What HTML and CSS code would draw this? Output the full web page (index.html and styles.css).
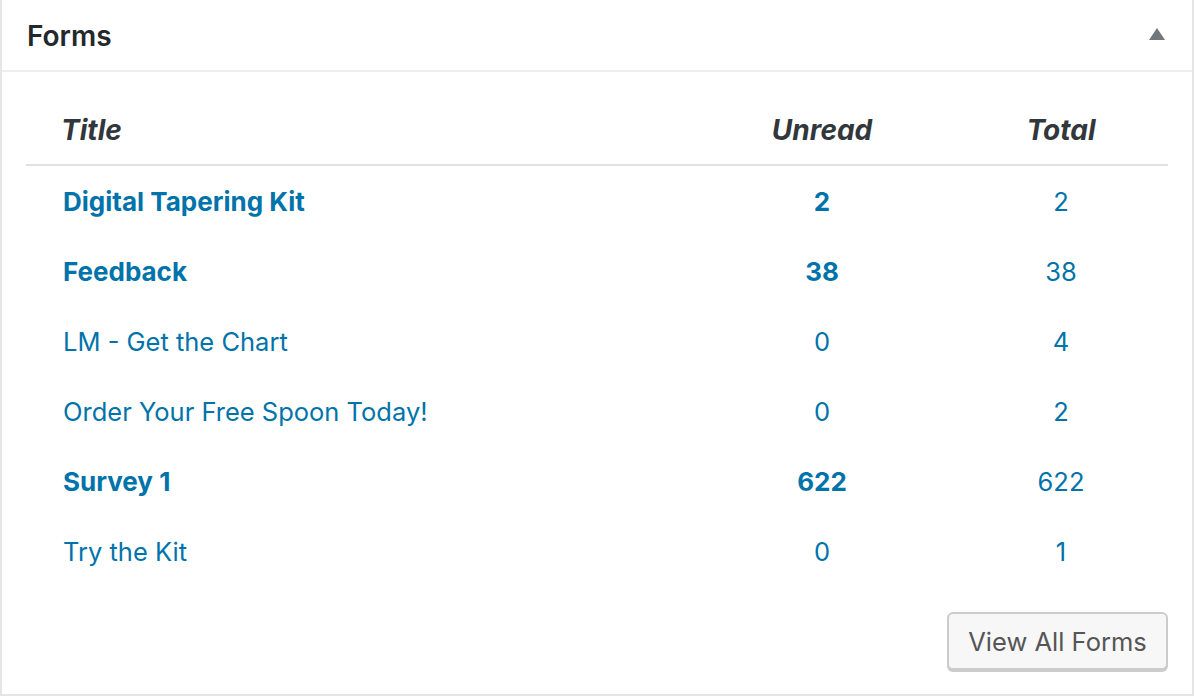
FILE: index.html
```html
<!DOCTYPE html>
<html>
<head>
<meta charset="utf-8">
<link rel="stylesheet" href="styles.css">
</head>
<body>
<div class="widget">
  <div class="widget-head">
    <h2 class="widget-title">Forms</h2>
    <span class="toggle" aria-hidden="true"></span>
  </div>
  <div class="widget-body">
    <div class="forms-table">
      <div class="row head">
        <div class="cell title">Title</div>
        <div class="cell num">Unread</div>
        <div class="cell num">Total</div>
      </div>
      <div class="row unread">
        <div class="cell title"><a href="#">Digital Tapering Kit</a></div>
        <div class="cell num"><a href="#">2</a></div>
        <div class="cell num total"><a href="#">2</a></div>
      </div>
      <div class="row unread">
        <div class="cell title"><a href="#">Feedback</a></div>
        <div class="cell num"><a href="#">38</a></div>
        <div class="cell num total"><a href="#">38</a></div>
      </div>
      <div class="row">
        <div class="cell title"><a href="#">LM - Get the Chart</a></div>
        <div class="cell num"><a href="#">0</a></div>
        <div class="cell num total"><a href="#">4</a></div>
      </div>
      <div class="row">
        <div class="cell title"><a href="#">Order Your Free Spoon Today!</a></div>
        <div class="cell num"><a href="#">0</a></div>
        <div class="cell num total"><a href="#">2</a></div>
      </div>
      <div class="row unread">
        <div class="cell title"><a href="#">Survey 1</a></div>
        <div class="cell num"><a href="#">622</a></div>
        <div class="cell num total"><a href="#">622</a></div>
      </div>
      <div class="row">
        <div class="cell title"><a href="#">Try the Kit</a></div>
        <div class="cell num"><a href="#">0</a></div>
        <div class="cell num total"><a href="#">1</a></div>
      </div>
    </div>
    <div class="actions">
      <a class="button" href="#">View All Forms</a>
    </div>
  </div>
</div>
</body>
</html>
```

FILE: styles.css
```css
html, body {
  margin: 0;
  padding: 0;
  background: #ffffff;
}
body {
  font-family: Inter, "Noto Sans", "Liberation Sans", sans-serif;
  color: #32373c;
}
.widget {
  width: 1194px;
  height: 696px;
  box-sizing: border-box;
  border: 2px solid #e5e5e5;
  border-top: none;
  background: #fff;
}
.widget-head {
  height: 70px;
  border-bottom: 2px solid #eeeeee;
  display: flex;
  align-items: center;
  justify-content: space-between;
  padding: 0 27px 0 25px;
}
.widget-title {
  margin: 0;
  font-size: 28px;
  font-weight: 600;
  color: #23282d;
  padding-top: 2px;
}
.toggle {
  width: 0;
  height: 0;
  border-left: 8px solid transparent;
  border-right: 8px solid transparent;
  border-bottom: 12px solid #72777c;
  margin-bottom: 2px;
}
.widget-body {
  padding: 24px 24px 0 24px;
}
.row {
  display: grid;
  grid-template-columns: 664px 264px 214px;
  height: 70px;
  align-items: center;
}
.row.head {
  height: 68px;
  border-bottom: 2px solid #e1e1e1;
  font-style: italic;
  font-weight: 700;
  font-size: 28px;
  color: #32373c;
}
.row.head .cell.title {
  padding-left: 35px;
}
.cell.title {
  padding-left: 37px;
}
.cell.num {
  text-align: center;
}
.row a {
  color: #0073aa;
  text-decoration: none;
  font-size: 25.5px;
}
.row.unread .cell.title a,
.row.unread .cell.num:not(.total) a {
  font-weight: 700;
  font-size: 26px;
}
.actions {
  display: flex;
  justify-content: flex-end;
  padding-top: 26px;
}
.button {
  display: inline-flex;
  align-items: center;
  justify-content: center;
  box-sizing: border-box;
  width: 221px;
  height: 58px;
  border: 2px solid #cccccc;
  border-radius: 6px;
  background: #f7f7f7;
  box-shadow: 0 2px 0 #cccccc;
  color: #555555;
  font-size: 25.5px;
  text-decoration: none;
}
```
